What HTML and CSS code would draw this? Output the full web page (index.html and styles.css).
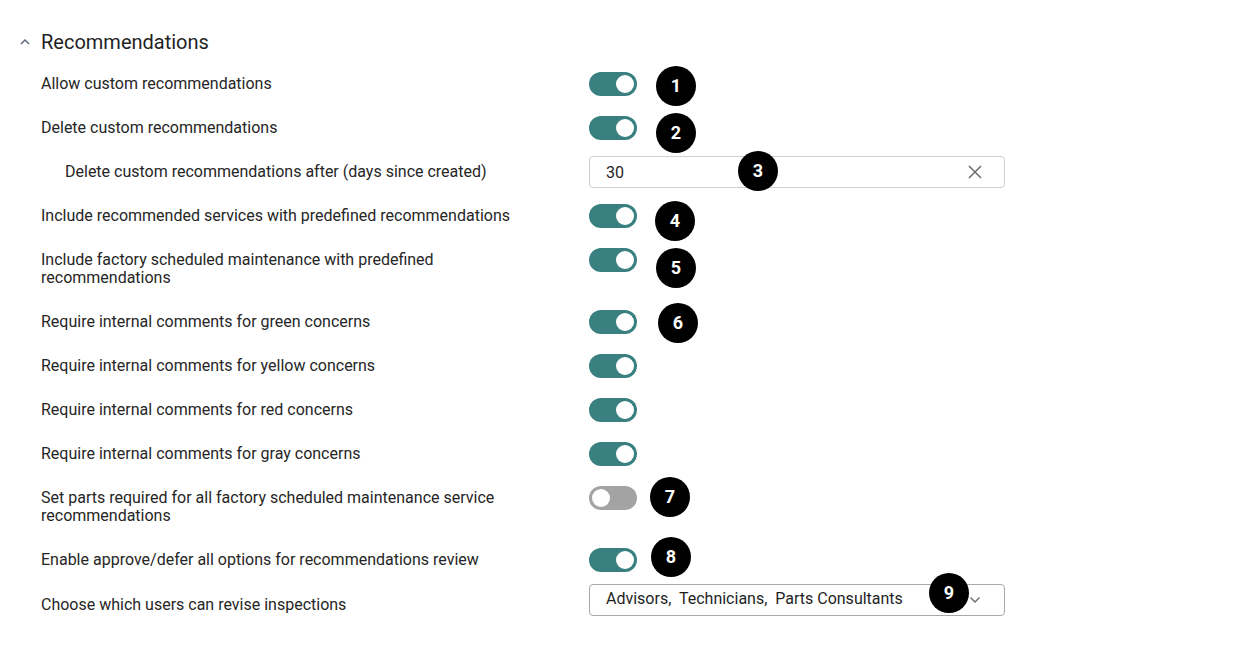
FILE: index.html
```html
<!DOCTYPE html>
<html lang="en">
<head>
  <meta charset="UTF-8" />
  <title>Recommendations settings</title>
  <meta name="viewport" content="width=device-width, initial-scale=1" />
  <link rel="stylesheet" href="styles.css">
</head>
<body>

  <div class="page">

    <div class="section-head">
      <svg class="chevron-up" width="10" height="6" viewBox="0 0 10 6">
        <path d="M1 5 L5 1 L9 5" fill="none" stroke="#5f6b7a" stroke-width="1.5"/>
      </svg>
      <span class="section-title">Recommendations</span>
    </div>

    <div class="settings">

      <div class="row">
        <div class="label">Allow custom recommendations</div>
        <div class="control"><span class="toggle on"></span></div>
      </div>

      <div class="row">
        <div class="label">Delete custom recommendations</div>
        <div class="control"><span class="toggle on"></span></div>
      </div>

      <div class="row row-field">
        <div class="label sub">Delete custom recommendations after (days since created)</div>
        <div class="control">
          <div class="field">
            <span class="field-value">30</span>
            <svg class="field-icon" width="14" height="14" viewBox="0 0 14 14">
              <path d="M1 1 L13 13 M13 1 L1 13" stroke="#6b6b6b" stroke-width="1.5" fill="none"/>
            </svg>
          </div>
        </div>
      </div>

      <div class="row">
        <div class="label">Include recommended services with predefined recommendations</div>
        <div class="control"><span class="toggle on"></span></div>
      </div>

      <div class="row">
        <div class="label">Include factory scheduled maintenance with predefined<br>recommendations</div>
        <div class="control"><span class="toggle on"></span></div>
      </div>

      <div class="row">
        <div class="label">Require internal comments for green concerns</div>
        <div class="control"><span class="toggle on"></span></div>
      </div>

      <div class="row">
        <div class="label">Require internal comments for yellow concerns</div>
        <div class="control"><span class="toggle on"></span></div>
      </div>

      <div class="row">
        <div class="label">Require internal comments for red concerns</div>
        <div class="control"><span class="toggle on"></span></div>
      </div>

      <div class="row">
        <div class="label">Require internal comments for gray concerns</div>
        <div class="control"><span class="toggle on"></span></div>
      </div>

      <div class="row">
        <div class="label">Set parts required for all factory scheduled maintenance service<br>recommendations</div>
        <div class="control"><span class="toggle"></span></div>
      </div>

      <div class="row">
        <div class="label">Enable approve/defer all options for recommendations review</div>
        <div class="control"><span class="toggle on"></span></div>
      </div>

      <div class="row row-field row-select">
        <div class="label">Choose which users can revise inspections</div>
        <div class="control">
          <div class="field">
            <span class="field-value">Advisors,&nbsp; Technicians,&nbsp; Parts Consultants</span>
            <svg class="field-icon" width="12" height="8" viewBox="0 0 12 8">
              <path d="M1.5 1.5 L6 6 L10.5 1.5" stroke="#6b6b6b" stroke-width="1.4" fill="none"/>
            </svg>
          </div>
        </div>
      </div>

    </div>

    <!-- annotation markers -->
    <span class="marker" style="left:656px; top:66px">1</span>
    <span class="marker" style="left:656px; top:113px">2</span>
    <span class="marker" style="left:738px; top:151px">3</span>
    <span class="marker" style="left:655px; top:201px">4</span>
    <span class="marker" style="left:656px; top:248px">5</span>
    <span class="marker" style="left:658px; top:303px">6</span>
    <span class="marker" style="left:650px; top:477px">7</span>
    <span class="marker" style="left:651px; top:537px">8</span>
    <span class="marker" style="left:929px; top:573px">9</span>

  </div>

</body>
</html>
```

FILE: styles.css
```css
body {
  margin: 0;
  background: #fff;
  color: #212121;
  font-family: Roboto, 'Liberation Sans', sans-serif;
}

.page {
  position: relative;
  padding-top: 30px;
  min-height: 617px;
}

.section-head {
  display: flex;
  align-items: center;
  height: 24px;
  margin-bottom: 8px;
}

.chevron-up {
  margin-left: 20px;
  margin-right: 11px;
}

.section-title {
  font-size: 20px;
  color: #1f1f1f;
}

.row {
  display: flex;
  align-items: flex-start;
  padding: 10px 0;
}

.row-field {
  padding: 6px 0;
}

.row-select {
  padding-top: 2px;
}

.label {
  flex: 0 0 589px;
  padding: 3px 0 3px 41px;
  box-sizing: border-box;
  font-size: 16px;
  line-height: 18px;
  color: #262626;
}

.row-field .label {
  padding-top: 7px;
  padding-bottom: 7px;
}

.row-select .label {
  padding-top: 12px;
  padding-bottom: 2px;
}

.label.sub {
  padding-left: 65px;
}

.control {
  display: flex;
  align-items: center;
}

/* Toggle */
.toggle {
  position: relative;
  display: block;
  width: 48px;
  height: 24px;
  border-radius: 12px;
  background: #a3a3a3;
}

.toggle::after {
  content: "";
  position: absolute;
  top: 3px;
  left: 3px;
  width: 18px;
  height: 18px;
  border-radius: 50%;
  background: #fff;
}

.toggle.on {
  background: #3a8080;
}

.toggle.on::after {
  left: 27px;
}

/* Input / select */
.field {
  display: flex;
  align-items: center;
  justify-content: space-between;
  width: 416px;
  height: 32px;
  box-sizing: border-box;
  padding: 0 22px 0 16px;
  border: 1px solid #cfcfcf;
  border-radius: 4px;
  font-size: 16px;
  color: #1f1f1f;
}

.row-select .field {
  border-color: #a8a8a8;
  padding-right: 23px;
}

.row-select .field-value {
  margin-top: -4px;
}

/* Annotation markers */
.marker {
  position: absolute;
  width: 40px;
  height: 40px;
  border-radius: 50%;
  background: #000;
  color: #fff;
  font-size: 18px;
  font-weight: bold;
  line-height: 40px;
  text-align: center;
}
```
